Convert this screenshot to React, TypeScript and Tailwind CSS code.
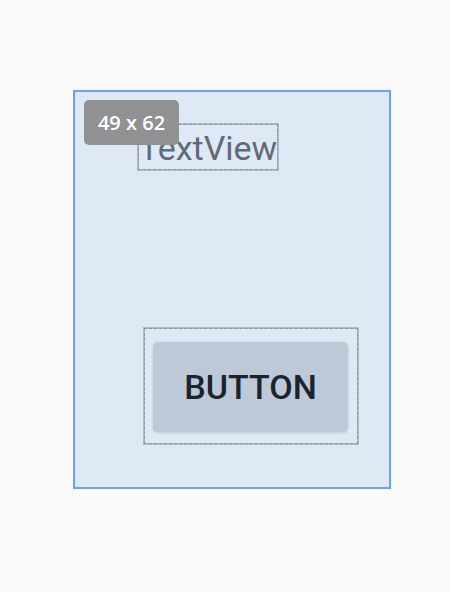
import React from "react";

export default function App() {
  return (
    <div className="w-[450px] h-[592px] bg-[#fafafa] pt-[90px] pl-[73px]" style={{ fontFamily: "Roboto, 'Noto Sans', sans-serif" }}>
      <div className="relative w-[318px] h-[399px] border-2 border-[#69a3f6] bg-[#dfe9f6] flex flex-col">
        <div className="ml-[62px] mt-[31px] w-[142px] h-[48px] border-2 border-[#b0b9c4] outline-1 outline-dashed outline-[#8f99a5] outline-offset-[-2px] flex items-center pt-[2px]">
          <span className="text-[34px] leading-none text-[#5f6b79] whitespace-nowrap">TextView</span>
        </div>
        <div className="ml-[68px] mt-[156px] w-[216px] h-[118px] border-2 border-[#b0b9c4] outline-1 outline-dashed outline-[#8f99a5] outline-offset-[-2px] pl-[8px] pt-[13px]">
          <div className="w-[195px] h-[90px] rounded-[5px] bg-[#bdc9d6] shadow-[0_1px_3px_rgba(0,0,0,0.15)] flex items-center justify-center">
            <span className="text-[34px] font-medium leading-none text-[#1b232d]">BUTTON</span>
          </div>
        </div>
        <div className="absolute left-[9px] top-[8px] w-[95px] h-[45px] rounded-[5px] bg-[#8f9192] flex items-center justify-center">
          <span className="text-[20px] font-semibold text-white leading-none" style={{ fontFamily: "'Open Sans', 'Noto Sans', sans-serif" }}>49 x 62</span>
        </div>
      </div>
    </div>
  );
}
